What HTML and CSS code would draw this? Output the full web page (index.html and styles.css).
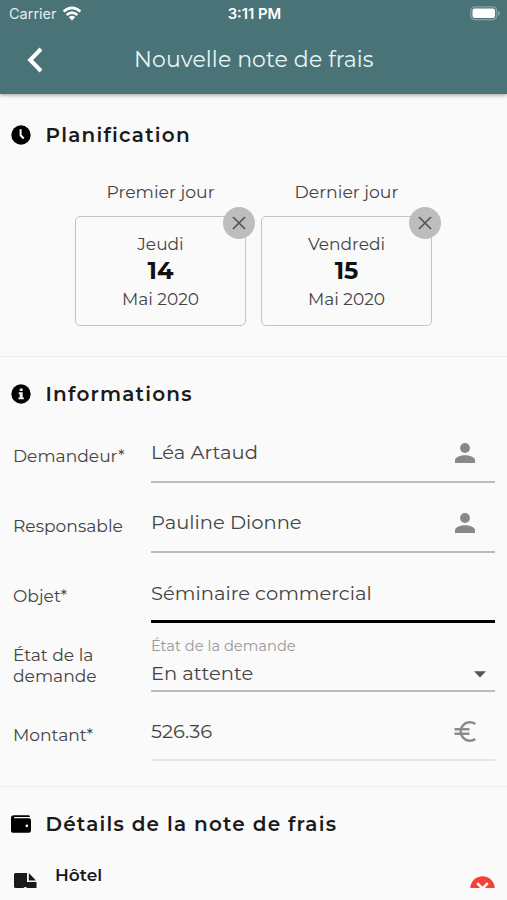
FILE: index.html
```html
<!DOCTYPE html>
<html lang="fr">
<head>
<meta charset="utf-8">
<title>Nouvelle note de frais</title>
<link rel="stylesheet" href="styles.css">
</head>
<body>
<header class="header">
  <div class="status">
    <div class="carrier"><span>Carrier</span>
      <svg width="20" height="16" viewBox="0 0 20 16"><g fill="none" stroke="#fff" stroke-width="2.6"><path d="M1.6 5.5Q10-1.9 18.4 5.5"/><path d="M4.6 9Q10 4.2 15.4 9"/></g><path d="M6.8 11.2Q10 8.5 13.2 11.2L10 14.5Z" fill="#fff"/></svg>
    </div>
    <div class="clock">3:11 PM</div>
    <svg class="battery" width="30" height="15" viewBox="0 0 30 15"><rect x=".8" y=".8" width="26" height="12.9" rx="4" fill="none" stroke="#86a3a6" stroke-width="1.2"/><rect x="2.5" y="2.5" width="22.6" height="9.5" rx="2.2" fill="#fff"/><path d="M28 4.7Q30 5.5 30 7.2T28 9.7Z" fill="#86a3a6"/></svg>
  </div>
  <nav class="nav">
    <svg class="back" width="16" height="26" viewBox="0 0 16 26"><path d="M14 2L3.2 13L14 24" fill="none" stroke="#fff" stroke-width="4"/></svg>
    <h1 class="title">Nouvelle note de frais</h1>
  </nav>
</header>
<main>
  <section class="section planning">
    <h2 class="heading"><svg width="20" height="20" viewBox="0 0 20 20"><circle cx="10" cy="10" r="9.7"/><path d="M9.6 4.2V10.3L12.7 13.5" fill="none" stroke="#fafafa" stroke-width="2"/></svg><span>Planification</span></h2>
    <div class="days">
      <div class="day">
        <div class="day-label">Premier jour</div>
        <div class="card"><span>Jeudi</span><strong>14</strong><span class="month">Mai 2020</span>
          <span class="clear"><svg width="32" height="32" viewBox="0 0 32 32"><path d="M10 10L22 22M22 10L10 22" stroke="#555" stroke-width="1.7"/></svg></span></div>
      </div>
      <div class="day">
        <div class="day-label">Dernier jour</div>
        <div class="card"><span>Vendredi</span><strong>15</strong><span class="month">Mai 2020</span>
          <span class="clear"><svg width="32" height="32" viewBox="0 0 32 32"><path d="M10 10L22 22M22 10L10 22" stroke="#555" stroke-width="1.7"/></svg></span></div>
      </div>
    </div>
  </section>
  <section class="section infos">
    <h2 class="heading"><svg width="20" height="20" viewBox="0 0 20 20"><circle cx="10" cy="10" r="9.7"/><path d="M8.7 4.4h3v2.7h-3zM7.7 8.2h4v5.2h1.2v1.8H7.4v-1.8h1.3V10h-1z" fill="#eee"/></svg><span>Informations</span></h2>
    <div class="row"><label class="label">Demandeur*</label><div class="field"><span>Léa Artaud</span><svg class="person" width="20" height="20" viewBox="0 0 20 20"><circle cx="10" cy="5" r="4.9"/><path d="M0 20V17.3C0 14 6 12.3 10 12.3S20 14 20 17.3V20Z"/></svg></div></div>
    <div class="row"><label class="label">Responsable</label><div class="field"><span>Pauline Dionne</span><svg class="person" width="20" height="20" viewBox="0 0 20 20"><circle cx="10" cy="5" r="4.9"/><path d="M0 20V17.3C0 14 6 12.3 10 12.3S20 14 20 17.3V20Z"/></svg></div></div>
    <div class="row"><label class="label">Objet*</label><div class="field active"><span>Séminaire commercial</span></div></div>
    <div class="row"><label class="label wrapped">État de la<br>demande</label><div class="field select"><div class="stack"><small>État de la demande</small><span>En attente</span></div><svg class="caret" width="12" height="7" viewBox="0 0 12 7"><path d="M0 .3H12L6 6.5Z" fill="#555"/></svg></div></div>
    <div class="row"><label class="label">Montant*</label><div class="field light"><span>526.36</span><svg class="euro" width="23" height="23" viewBox="0 0 23 23"><path d="M21.3 3.9A9.3 9.3 0 1 0 21.3 19.1M.5 9.3H15.5M.5 13.7H15.5" fill="none" stroke="#8b8b8b" stroke-width="2.5"/></svg></div></div>
  </section>
  <section class="details">
    <h2 class="heading"><svg width="20" height="18" viewBox="0 0 20 18"><path d="M3 .3H17.5Q19 .3 19 2H3.2V3.3H18Q20 3.3 20 5.4V15.6Q20 17.8 17.8 17.8H2.5Q0 17.8 0 15.2V3Q0 .3 3 .3Z"/><circle cx="15.8" cy="10.8" r="1.4" fill="#fafafa"/></svg><span>Détails de la note de frais</span></h2>
    <div class="expense">
      <svg class="truck" width="23" height="15" viewBox="0 0 23 15"><path d="M1.5 0H13V9H22.5V15H13.2Q11.3 13 9.4 15H1.5Q0 15 0 13.5V1.5Q0 0 1.5 0Z"/><path d="M14.8 0L22 7.5H14.8Z"/></svg>
      <span class="hotel">Hôtel</span>
      <svg class="remove" width="25" height="12" viewBox="0 0 25 12"><circle cx="12.5" cy="12.5" r="12.2" fill="#f44336"/><path d="M7.2 7.2L17.8 17.8M17.8 7.2L7.2 17.8" stroke="#fff" stroke-width="2.6"/></svg>
    </div>
  </section>
</main>
</body>
</html>
```
FILE: styles.css
```css
* { box-sizing: border-box; }
body { margin: 0; height: 900px; overflow: hidden; background: #fafafa; color: #444; font-family: Montserrat, Inter, sans-serif; }
svg { display: block; flex: none; }
.header { position: relative; height: 94px; background: #4a7377; color: #fff; box-shadow: 0 1px 4px rgba(0,0,0,.4); }
.status { display: grid; grid-template-columns: 1fr auto 1fr; height: 27px; padding: 0 7px 0 9px; align-items: center; font-family: Inter, sans-serif; }
.carrier { display: flex; gap: 5px; align-items: center; font-size: 14.5px; color: #e2eef0; }
.clock { font-size: 14.8px; font-weight: 600; }
.battery { justify-self: end; }
.nav { display: grid; grid-template-columns: 134px auto; height: 66px; align-items: center; }
.back { margin-left: 27px; }
.title { margin: 0; font-size: 22px; line-height: 28px; font-weight: 400; letter-spacing: .1px; color: #e6f5f8; white-space: nowrap; }
.section { border-bottom: 1px solid #ececec; }
.planning { height: 263px; padding-top: 24px; }
.infos { height: 430px; padding-top: 20px; }
.heading { display: flex; align-items: center; gap: 15px; height: 34px; margin: 0; padding-left: 10.5px; font-size: 20px; font-weight: 650; letter-spacing: 1.2px; color: #1a1a1a; white-space: nowrap; }
.heading svg { fill: #000; }
.heading span { position: relative; top: -.5px; }
.days { display: flex; gap: 15px; padding: 28px 0 0 75px; }
.day { width: 171px; text-align: center; }
.day-label { height: 36px; line-height: 24px; font-size: 17.3px; }
.card { position: relative; height: 110px; padding-top: 14px; display: flex; flex-direction: column; align-items: center; border: 1.5px solid #c4c4c4; border-radius: 5px; font-size: 17px; line-height: 27px; }
.card strong { font-size: 24px; line-height: 25px; color: #111; }
.month { margin-top: 3px; }
.clear { position: absolute; top: -10px; right: -10px; border-radius: 50%; background: #bdbdbd; }
.row { display: grid; grid-template-columns: 138px 344px; height: 69.6px; padding-left: 13px; }
.infos .heading + .row { height: 72px; padding-top: 2px; }
.label { align-self: center; padding-top: 15.4px; font-size: 17.1px; line-height: 21px; }
.field { display: flex; justify-content: space-between; padding: 27px 20px 0 0; border-bottom: 2px solid #bbb; font-size: 19.5px; line-height: 24px; }
.person { margin-top: 3px; fill: #888; }
.active { position: relative; top: 1px; border-bottom: 3px solid #000; }
.active span { padding-top: .6px; }
.select { padding: 12px 9px 0 0; }
.stack { display: flex; flex-direction: column; }
.stack small { font-size: 14.7px; line-height: 24px; color: #999; }
.stack span { line-height: 30px; }
.caret { margin-top: 37px; }
.light { padding-right: 18px; border-color: #e5e5e5; }
.euro { margin-top: 1px; }
.wrapped { padding-top: 16px; }
.details { padding-top: 20px; }
.expense { display: grid; grid-template-columns: 41px 1fr 25px; height: 47px; padding: 0 12px 0 14px; }
.truck { margin-top: 32px; fill: #1a1a1a; }
.hotel { margin-top: 22px; font-size: 17px; line-height: 24px; font-weight: 650; color: #1a1a1a; }
.remove { margin-top: 35px; }
```
